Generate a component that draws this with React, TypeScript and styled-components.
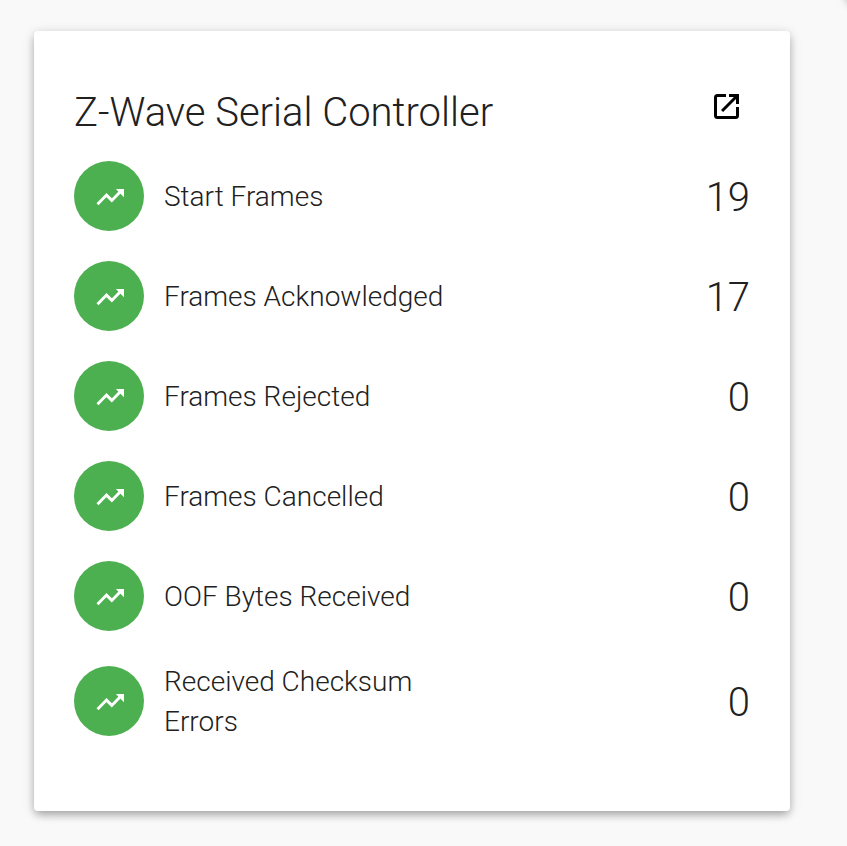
import React from "react";
import styled, { createGlobalStyle } from "styled-components";

const GlobalStyle = createGlobalStyle`
  *, *::before, *::after { box-sizing: border-box; }
  body {
    margin: 0;
    background: #f9f9f9;
    color: #212121;
    font-family: Roboto, "Liberation Sans", sans-serif;
    font-weight: 300;
  }
`;

const Board = styled.main`
  position: relative;
  overflow: hidden;
  padding: 31px 57px 35px 34px;
`;

const cardShadow = `
  0 5px 8px -2px rgba(0, 0, 0, 0.2),
  0 3px 10px 0 rgba(0, 0, 0, 0.14),
  0 2px 14px 0 rgba(0, 0, 0, 0.1)
`;

const Card = styled.section`
  padding: 50px 40px 55px;
  background: #fff;
  border-radius: 4px;
  box-shadow: ${cardShadow};
`;

const NeighbourCard = styled.div`
  position: absolute;
  bottom: 100%;
  left: 100%;
  width: 100%;
  height: 100%;
  border-radius: 4px;
  background: #fff;
  box-shadow: ${cardShadow};
`;

const CardHeader = styled.header`
  display: flex;
  align-items: center;
  justify-content: space-between;
  height: 60px;
  margin-bottom: 5px;
`;

const Title = styled.h1`
  margin: 0;
  padding-top: 4px;
  font-size: 40px;
  line-height: 60px;
  font-weight: 300;
`;

const OpenButton = styled.button`
  display: flex;
  margin: 0 8px 8px 0;
  padding: 0;
  border: 0;
  background: none;
  color: #000;
  cursor: pointer;
`;

const StatList = styled.ul`
  display: flex;
  flex-direction: column;
  margin: 0;
  padding: 0;
  list-style: none;
`;

const StatRow = styled.li`
  display: flex;
  align-items: center;
  min-height: 100px;
  padding: 15px 0;
`;

const StatIcon = styled.span`
  display: flex;
  flex: none;
  align-items: center;
  justify-content: center;
  width: 70px;
  height: 70px;
  margin-right: 20px;
  border-radius: 50%;
  background: #4caf50;
  color: #fff;
`;

const StatLabel = styled.span`
  flex: 0 1 290px;
  margin: -1px 0;
  padding-top: 2px;
  font-size: 28px;
  line-height: 40px;
`;

const StatValue = styled.span`
  margin-left: auto;
  padding-top: 4px;
  font-size: 40px;
  line-height: 60px;
`;

const stats = [
  { label: "Start Frames", value: 19 },
  { label: "Frames Acknowledged", value: 17 },
  { label: "Frames Rejected", value: 0 },
  { label: "Frames Cancelled", value: 0 },
  { label: "OOF Bytes Received", value: 0 },
  { label: "Received Checksum Errors", value: 0 },
];

const TrendingUpIcon = () => (
  <svg width="34" height="34" viewBox="0 0 34 34" fill="none" aria-hidden="true">
    <path d="M5.500 25.200L14.500 16.100 19.800 21.400 28.500 12.500" stroke="currentColor" strokeWidth="2.900" />
    <path d="M23.800 10H32V18.200z" fill="currentColor" />
  </svg>
);

const OpenInNewIcon = () => (
  <svg width="32" height="32" viewBox="0 0 32 32" fill="none" aria-hidden="true">
    <path
      d="M16 4.500H7.500a2 2 0 0 0-2 2v18a2 2 0 0 0 2 2h18a2 2 0 0 0 2-2V16"
      stroke="currentColor"
      strokeWidth="3"
    />
    <path d="M19 3h10v10h-3V8.100L13.100 21 11 18.900 23.900 6H19z" fill="currentColor" />
  </svg>
);

export default function App() {
  return (
    <>
      <GlobalStyle />
      <Board>
        <NeighbourCard />
        <Card>
          <CardHeader>
            <Title>Z-Wave Serial Controller</Title>
            <OpenButton type="button" aria-label="Open Z-Wave Serial Controller">
              <OpenInNewIcon />
            </OpenButton>
          </CardHeader>
          <StatList>
            {stats.map(({ label, value }) => (
              <StatRow key={label}>
                <StatIcon>
                  <TrendingUpIcon />
                </StatIcon>
                <StatLabel>{label}</StatLabel>
                <StatValue>{value}</StatValue>
              </StatRow>
            ))}
          </StatList>
        </Card>
      </Board>
    </>
  );
}
